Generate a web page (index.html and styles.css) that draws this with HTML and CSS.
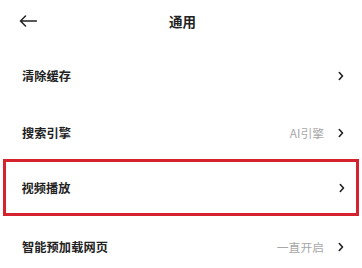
FILE: index.html
```html
<!DOCTYPE html>
<html lang="zh">
<head>
<meta charset="utf-8">
<link rel="stylesheet" href="styles.css">
</head>
<body>
<div class="page">
  <header class="header">
    <svg class="back" width="18" height="12" viewBox="0 0 18 12"><path d="M17.5 6H1.5M6.5 1L1.5 6L6.5 11" fill="none" stroke="#222" stroke-width="1.5" stroke-linecap="round" stroke-linejoin="round"/></svg>
    <div class="title">通用</div>
  </header>
  <div class="list">
    <div class="row">
      <span class="label">清除缓存</span>
      <span class="right"><svg class="chev" width="6" height="10" viewBox="0 0 6 10"><path d="M1.3 1.5L4.5 5L1.3 8.5" fill="none" stroke="#222" stroke-width="1.6" stroke-linecap="round" stroke-linejoin="round"/></svg></span>
    </div>
    <div class="row">
      <span class="label">搜索引擎</span>
      <span class="right"><span class="value">AI引擎</span><svg class="chev" width="6" height="10" viewBox="0 0 6 10"><path d="M1.3 1.5L4.5 5L1.3 8.5" fill="none" stroke="#222" stroke-width="1.6" stroke-linecap="round" stroke-linejoin="round"/></svg></span>
    </div>
    <div class="row row-highlight">
      <span class="label">视频播放</span>
      <span class="right"><svg class="chev" width="6" height="10" viewBox="0 0 6 10"><path d="M1.3 1.5L4.5 5L1.3 8.5" fill="none" stroke="#222" stroke-width="1.6" stroke-linecap="round" stroke-linejoin="round"/></svg></span>
    </div>
    <div class="row">
      <span class="label">智能预加载网页</span>
      <span class="right"><span class="value">一直开启</span><svg class="chev" width="6" height="10" viewBox="0 0 6 10"><path d="M1.3 1.5L4.5 5L1.3 8.5" fill="none" stroke="#222" stroke-width="1.6" stroke-linecap="round" stroke-linejoin="round"/></svg></span>
    </div>
  </div>
</div>
</body>
</html>
```

FILE: styles.css
```css
html, body {
  margin: 0;
  padding: 0;
  background: #ffffff;
}
body {
  font-family: "Noto Sans CJK SC", "Noto Sans", sans-serif;
  color: #222222;
  overflow: hidden;
}
.page {
  width: 362px;
  height: 268px;
}
.header {
  height: 42px;
  display: grid;
  grid-template-columns: 1fr auto 1fr;
  align-items: center;
  padding-left: 19px;
}
.back {
  display: block;
}
.title {
  font-size: 13.5px;
  font-weight: 700;
  transform: translateX(-8px);
}
.list {
  padding-top: 5px;
}
.row {
  height: 57px;
  display: flex;
  align-items: center;
  justify-content: space-between;
  padding: 0 18px 0 22px;
  box-sizing: border-box;
}
.label {
  font-size: 12.2px;
  font-weight: 700;
  letter-spacing: 0.1px;
}
.right {
  display: flex;
  align-items: center;
  gap: 14px;
}
.value {
  font-size: 11.8px;
  color: #a8a8a8;
}
.chev {
  display: block;
}
.row-highlight {
  margin: -2px 3px 2px 3px;
  border: 3.5px solid #d4232e;
  padding: 0 11.5px 0 15.5px;
}
```
